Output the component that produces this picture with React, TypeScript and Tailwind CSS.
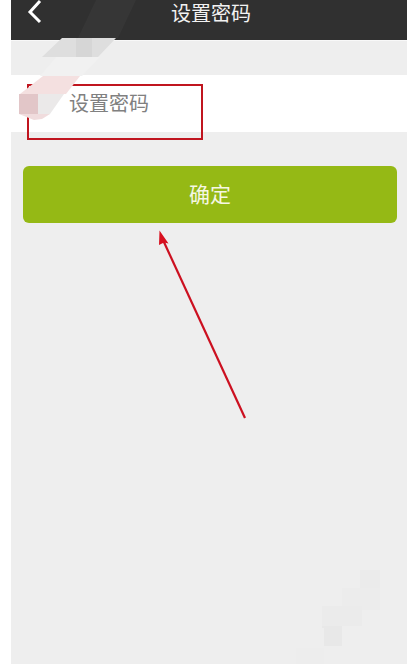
const cjk = { fontFamily: '"Noto Sans CJK SC", "Liberation Sans", sans-serif' };

function Watermarks() {
  return (
    <svg className="pointer-events-none absolute left-0 top-0" width="407" height="664" viewBox="0 0 407 664">
      {/* mosaic at top left */}
      <path d="M96 0h40l-18 38H78z" fill="#393939" opacity="0.7" />
      <path d="M62 38h54L98 57H42z" fill="#dedede" />
      <path d="M76 38h16v19H76z" fill="#d6d6d6" />
      <path d="M56 57h44L82 76H40z" fill="#f1f1f1" />
      <path d="M43 76h37L66 94H20z" fill="#f4e0e0" />
      <path d="M19 94h19v20H19z" fill="#e2c6c8" />
      <path d="M38 94h26L50 114H38z" fill="#ebe9e9" />
      <path d="M19 114h31l-8 5-8 1z" fill="#f0dcdd" />
      {/* mosaic at bottom right */}
      <path d="M360 570h20v20h-20z" fill="#ebebeb" />
      <path d="M380 572h20v18h-20z" fill="#eeeeee" />
      <path d="M342 588h38v22h-38z" fill="#ececec" />
      <path d="M322 606h40v20h-40z" fill="#ebebeb" />
      <path d="M322 626h20v20h-20z" fill="#e8e8e8" />
      <path d="M312 628h12v20h-12z" fill="#eeeeee" />
      <path d="M296 648h28v16h-28z" fill="#ededed" />
    </svg>
  );
}

function Annotations() {
  return (
    <svg className="pointer-events-none absolute left-0 top-0" width="407" height="664" viewBox="0 0 407 664">
      <rect x="28" y="85" width="174" height="54" fill="none" stroke="#c0151f" strokeWidth="2" />
      <line x1="245" y1="418" x2="163" y2="240" stroke="#cc1020" strokeWidth="2.200" />
      <path d="M159.500 230.500l9 13-4.500-1-5 2.500z" fill="#d8101f" />
    </svg>
  );
}

export default function App() {
  return (
    <div className="relative flex h-[664px] w-[407px] overflow-hidden bg-white" style={cjk}>
      <div className="w-[11px] shrink-0 bg-white" />
      <div className="flex flex-1 flex-col bg-[#eeeeee]">
        <header className="relative flex h-[41px] shrink-0 items-start justify-center border-b border-[#f8f8f8] bg-[#303030] pl-[4px]">
          <svg className="absolute left-[15px] top-0" width="18" height="24" viewBox="0 0 18 24">
            <path d="M14 1 4 12l10 10" fill="none" stroke="#ffffff" strokeWidth="3" />
          </svg>
          <h1 className="pt-[1px] text-[20px] leading-[24px] font-normal text-[#f2f2f2]">设置密码</h1>
        </header>
        <div className="mt-[34px] flex h-[57px] shrink-0 items-center bg-white pb-[1px] pl-[58px]">
          <span className="text-[20px] text-[#808080]">设置密码</span>
        </div>
        <button className="ml-[12px] mr-[10px] mt-[34px] h-[57px] rounded-[6px] bg-[#95b915] pb-[2px] text-[21px] text-[#f5f7e4]">
          确定
        </button>
      </div>
      <Annotations />
      <Watermarks />
    </div>
  );
}
